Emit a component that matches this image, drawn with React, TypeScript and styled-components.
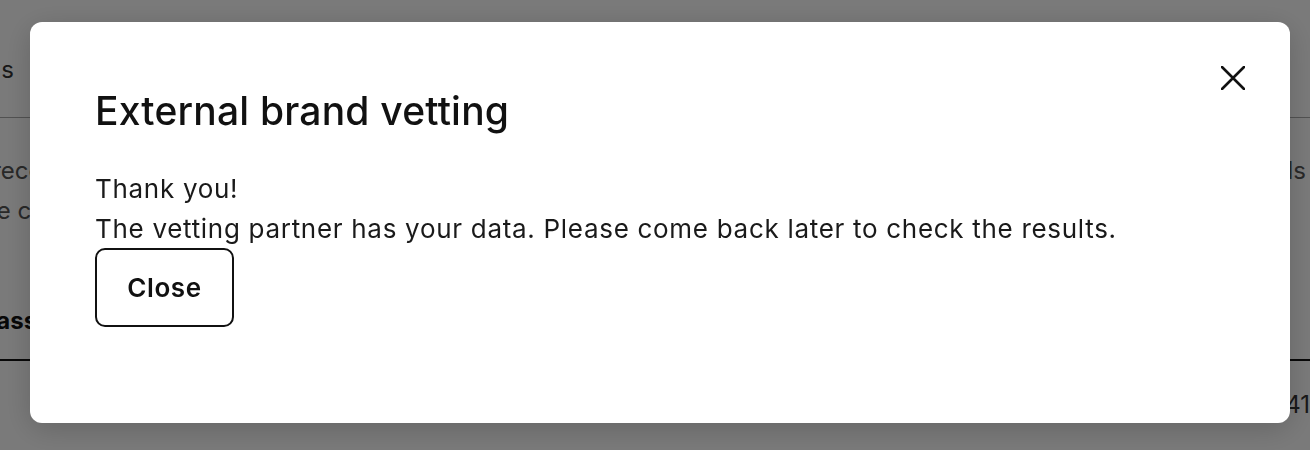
import React from "react";
import styled, { createGlobalStyle } from "styled-components";

const GlobalStyle = createGlobalStyle`
  html, body {
    margin: 0;
    padding: 0;
    width: 1310px;
    height: 450px;
    overflow: hidden;
    background: #ffffff;
    font-family: Inter, "Liberation Sans", sans-serif;
    color: #111111;
  }
`

// page that sits behind the dialog
const Page = styled.div`
  margin-left: -70px;
  width: 1440px;
  display: flex;
  flex-direction: column;
`
const Tabs = styled.div`
  display: flex;
  align-items: center;
  height: 118px;
  padding-top: 22px;
  box-sizing: border-box;
  font-size: 24px;
  color: #333333;
  border-bottom: 1px solid #aaaaaa;
`
const TabLabel = styled.span`
  margin-left: -8px;
`
const Intro = styled.p`
  margin: 33px 0 0;
  padding-left: 19px;
  font-size: 24px;
  line-height: 40px;
  color: #555555;
  white-space: nowrap;
`
const TableHead = styled.div`
  margin-top: 50px;
  height: 80px;
  display: flex;
  align-items: center;
  padding-left: 42px;
  font-size: 24px;
  font-weight: 700;
  color: #111111;
  border-bottom: 2px solid #111111;
  box-sizing: border-box;
`
const TableRow = styled.div`
  display: flex;
  justify-content: flex-end;
  height: 86px;
  align-items: center;
  font-size: 24px;
  color: #333333;
  padding-right: 60px;
`

// dialog
const Overlay = styled.div`
  position: fixed;
  inset: 0;
  background: rgba(0, 0, 0, 0.52);
  display: flex;
  align-items: flex-start;
  justify-content: flex-start;
  padding: 22px 0 0 30px;
`
const Dialog = styled.div`
  position: relative;
  box-sizing: border-box;
  width: 1260px;
  height: 401px;
  background: #ffffff;
  border-radius: 12px;
  padding: 65px 64px 0 65px;
  box-shadow: 0 6px 30px rgba(0, 0, 0, 0.18);
  display: flex;
  flex-direction: column;
  align-items: flex-start;
`
const CloseIcon = styled.button`
  position: absolute;
  top: 44px;
  right: 45px;
  width: 24px;
  height: 24px;
  padding: 0;
  border: none;
  background: none;
  display: flex;
  color: #111111;
`
const Title = styled.h2`
  margin: 0 0 35px;
  font-size: 39px;
  line-height: 47px;
  font-weight: 500;
  letter-spacing: 0.2px;
  color: #111111;
`
const Line = styled.p`
  margin: 0;
  font-size: 26px;
  line-height: 40px;
  font-weight: 400;
  letter-spacing: 0.7px;
  color: #1a1a1a;
  white-space: nowrap;
`
const Button = styled.button`
  margin-top: -1px;
  box-sizing: border-box;
  width: 139px;
  height: 79px;
  border: 2px solid #111111;
  border-radius: 10px;
  background: #ffffff;
  font-family: Inter, "Liberation Sans", sans-serif;
  font-size: 26px;
  font-weight: 600;
  letter-spacing: 0.6px;
  color: #111111;
`

const App = () => {
  return (
    <>
      <GlobalStyle />
      <Page>
        <Tabs>
          <TabLabel>Settings</TabLabel>
        </Tabs>
        <Intro>
          We recommend completing external brand vetting before you launch any of your new campaigns on the platform, it tells partners who you are as a brand
          <br />
          Make campaigns easier to approve: the checks are done by a trusted partner and the results are shared here.
        </Intro>
        <TableHead>Class</TableHead>
        <TableRow>41</TableRow>
      </Page>
      <Overlay>
        <Dialog>
          <CloseIcon aria-label="Close">
            <svg width="24" height="24" viewBox="0 0 24 24" fill="none">
              <path d="M1 1L23 23M23 1L1 23" stroke="currentColor" strokeWidth="2.6" strokeLinecap="round" />
            </svg>
          </CloseIcon>
          <Title>External brand vetting</Title>
          <Line>Thank you!</Line>
          <Line>The vetting partner has your data. Please come back later to check the results.</Line>
          <Button>Close</Button>
        </Dialog>
      </Overlay>
    </>
  );
};

export default App;
